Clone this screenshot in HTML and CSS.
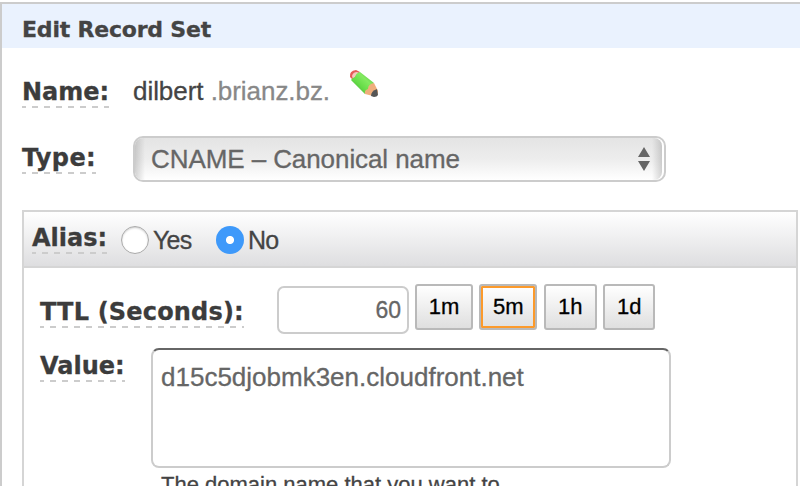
FILE: index.html
```html
<!DOCTYPE html>
<html lang="en">
<head>
<meta charset="utf-8">
<title>Edit Record Set</title>
<link rel="stylesheet" href="styles.css">
</head>
<body>
<main class="panel">
  <h1 class="panel-title"><span>Edit Record Set</span></h1>
  <div class="row row-name">
    <span class="label label-name">Name:</span>
    <span class="record">dilbert <span class="zone">.brianz.bz.</span></span>
    <svg class="pencil" viewBox="0 0 32 32" width="32" height="32">
      <defs>
        <linearGradient id="body" x1="0" y1="1" x2="1" y2="0">
          <stop offset="0" stop-color="#3c9c32"/><stop offset=".4" stop-color="#66dc48"/><stop offset=".65" stop-color="#83ea60"/><stop offset="1" stop-color="#44aa36"/>
        </linearGradient>
      </defs>
      <path d="M2 9 Q1 3 8 2 L12 4 L5 12Z" fill="#e65b58"/>
      <path d="M4 8 Q5 4 9 4 L11 5 L5 11Z" fill="#f4c8bf"/>
      <path d="M3 12 Q4 10 7 9 Q8 5 12 4 L26 15 L17 26Z" fill="url(#body)"/>
      <path d="M17 26 Q16 22 20 21 Q20 16 26 15 L30 23 Q30 29 25 28Z" fill="#efae7c"/>
      <path d="M23 28 Q23 23 29 21 L30 27 Q29 29 26 29Z" fill="#555"/>
    </svg>
  </div>
  <div class="row row-type">
    <span class="label label-type">Type:</span>
    <div class="select">
      <div class="select-face">
        <span>CNAME – Canonical name</span>
        <svg class="arrows" viewBox="0 0 12 24" width="12" height="24"><path d="M6 0L12 10H0Z M0 14H12L6 24Z" fill="#666"/></svg>
      </div>
    </div>
  </div>
  <section class="box">
    <div class="alias">
      <span class="label label-alias">Alias:</span>
      <span class="radio"></span><span class="option yes">Yes</span>
      <span class="radio checked"></span><span class="option">No</span>
    </div>
    <div class="row row-ttl">
      <span class="label label-ttl">TTL (Seconds):</span>
      <div class="ttl-input">60</div>
      <div class="buttons">
        <button class="btn w58">1m</button>
        <button class="btn w58 active">5m</button>
        <button class="btn w53">1h</button>
        <button class="btn w52">1d</button>
      </div>
    </div>
    <div class="row row-value">
      <span class="label label-value">Value:</span>
      <div class="value-field">
        <div class="textarea"><span>d15c5djobmk3en.cloudfront.net</span></div>
        <div class="hint">The domain name that you want to</div>
      </div>
    </div>
  </section>
</main>
</body>
</html>
```
FILE: styles.css
```css
* { box-sizing: border-box; }
body {
  margin: 0;
  height: 486px;
  overflow: hidden;
  background: #fff;
  color: #444;
  font: 26px/30px "Liberation Sans", Arial, sans-serif;
  -webkit-text-stroke: 0.3px;
}
.panel {
  margin-top: 2px;
  height: 500px;
  border-top: 2px solid #ccc;
  border-left: 2px solid #ccc;
}
.panel-title {
  margin: 0;
  height: 44px;
  padding: 13px 0 0 20px;
  background: #eaf2fe;
  font: bold 22px/26px "DejaVu Sans", Verdana, sans-serif;
  letter-spacing: -0.2px;
}
.row { display: flex; align-items: flex-start; }
.label {
  flex: none;
  height: 30px;
  font: bold 24px/28px "DejaVu Sans", Verdana, sans-serif;
  color: #3c3c3c;
  white-space: nowrap;
  background: repeating-linear-gradient(90deg, #ccc 0 4px, transparent 4px 10px, #ccc 10px 12px) 0 28px / 100% 2px no-repeat;
}
.label-name { width: 87px; }
.label-type { width: 74px; letter-spacing: 0.35px; }
.label-alias { width: 75px; }
.label-ttl { width: 204px; letter-spacing: 0.18px; }
.label-value { width: 85px; }
.row-name { height: 88px; padding: 30px 0 0 20px; }
.record { width: 197px; margin: -2px 0 0 24px; white-space: nowrap; letter-spacing: -0.05px; }
.zone { color: #888; }
.pencil { margin: -10px 0 0 18px; filter: blur(0.5px); }
.row-type { height: 74px; padding-left: 20px; }
.label-type { margin-top: 8px; }
.select {
  width: 533px;
  height: 46px;
  margin-left: 37px;
  border: 2px solid #ccc;
  border-radius: 10px;
  padding-right: 2px;
}
.select-face {
  display: flex;
  justify-content: space-between;
  height: 42px;
  padding: 6px 12px 0 16px;
  border-radius: 8px;
  color: #666;
  letter-spacing: -0.08px;
  background:
    linear-gradient(90deg, rgba(150,150,150,.4), rgba(180,180,180,0) 10px, rgba(180,180,180,0) calc(100% - 10px), rgba(150,150,150,.4)),
    linear-gradient(#e4e4e4, #ededed 50%, #fff);
}
.arrows { margin-top: 3px; }
.box {
  width: 776px;
  height: 300px;
  margin-left: 20px;
  border: 2px solid #d5d5d5;
}
.alias {
  display: flex;
  height: 56px;
  padding: 12px 0 0 8px;
  border-bottom: 2px solid #d5d5d5;
  background: linear-gradient(#fff, #dedee0);
}
.radio {
  width: 28px;
  height: 28px;
  margin: 2px 4px 0 14px;
  border-radius: 50%;
  border: 1px solid #aaa;
  background: #fff;
  box-shadow: inset 0 1px 2px #ccc;
}
.radio.checked {
  margin-left: 0;
  border: 0;
  background: radial-gradient(circle, #fff 0 3.6px, #3e99fa 4.5px);
  box-shadow: none;
}
.option { height: 30px; margin-top: 1px; font-size: 25px; letter-spacing: -0.8px; }
.yes { width: 63px; }
.row-ttl { height: 80px; padding: 18px 0 0 16px; }
.label-ttl { margin-top: 12px; }
.ttl-input {
  width: 132px;
  height: 48px;
  margin-left: 33px;
  padding: 7px 6px 0 0;
  border: 2px solid #ccc;
  border-radius: 7px;
  font-size: 23px;
  text-align: right;
  color: #666;
}
.buttons { display: flex; gap: 6.4px; margin: -2px 0 0 6px; }
.btn {
  height: 46px;
  padding: 0;
  border: 2px solid #b9b9b9;
  border-radius: 3px;
  background: linear-gradient(#fff, #dfdfdf);
  color: #000;
  font: 22px/24px "Liberation Sans", Arial, sans-serif;
  -webkit-text-stroke: 0.3px;
}
.w58 { width: 58px; }
.w53 { width: 53px; }
.w52 { width: 52px; }
.btn.active { box-shadow: inset 0 0 0 2px #fc9a2b; }
.row-value { padding-left: 16px; }
.label-value { margin-top: 4px; }
.value-field { margin-left: 26px; }
.textarea {
  width: 520px;
  height: 120px;
  padding: 12px 8px;
  border: 2px solid #ccc;
  border-top-color: #666;
  border-radius: 8px;
  color: #666;
}
.hint { padding: 4px 0 0 10px; font-size: 22px; line-height: 26px; white-space: nowrap; }
```
